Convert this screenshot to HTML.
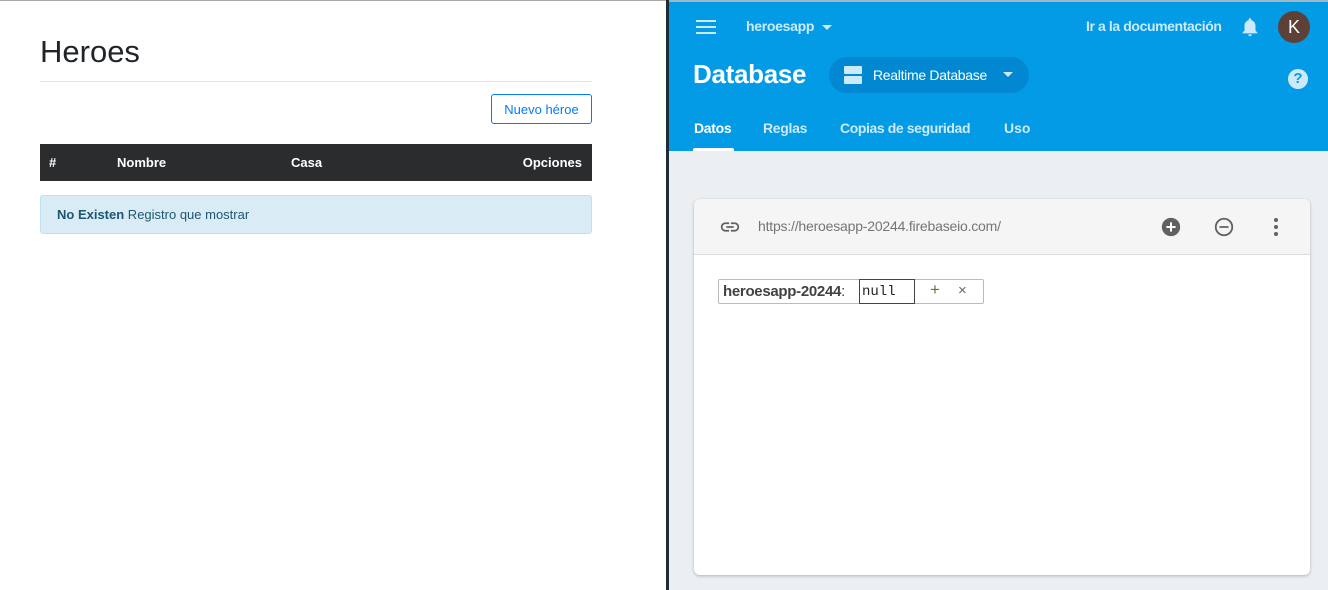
<!DOCTYPE html>
<html><head><meta charset="utf-8"><style>
*{box-sizing:border-box;margin:0;padding:0}
body{width:1328px;height:590px;overflow:hidden;font-family:"Liberation Sans",sans-serif;position:relative;background:#fff}
.a{position:absolute}
</style></head><body>
<div class="a" style="left:0;top:0;width:666px;height:1px;background:#aaa"></div>
<div class="a" style="left:40px;top:34px;font-size:31px;color:#212529">Heroes</div>
<div class="a" style="left:40px;top:81px;width:552px;height:1px;background:#e5e5e5"></div>
<div class="a" style="left:491px;top:94px;width:101px;height:30px;border:1px solid #007bff;border-radius:3px;color:#007bff;font-size:13px;text-align:center;line-height:29px">Nuevo héroe</div>
<div class="a" style="left:40px;top:144px;width:552px;height:37px;background:#2b2c2e;color:#fff;font-size:13px;font-weight:bold;line-height:38px">
<span class="a" style="left:9px">#</span><span class="a" style="left:77px">Nombre</span><span class="a" style="left:251px">Casa</span><span class="a" style="right:10px">Opciones</span></div>
<div class="a" style="left:40px;top:195px;width:552px;height:39px;background:#d9ecf5;border:1px solid #bfe0ee;border-radius:3px;color:#1d5670;font-size:13px;line-height:38px;padding-left:16px"><b>No Existen</b> Registro que mostrar</div>
<div class="a" style="left:666px;top:0;width:3px;height:590px;background:#1e2a38"></div>
<div class="a" style="left:669px;top:0;width:659px;height:590px;background:#eceff1"></div>
<div class="a" style="left:669px;top:0;width:659px;height:151px;background:#039be5"></div>
<div class="a" style="left:669px;top:0;width:659px;height:2px;background:#9fb6c4"></div>
<div class="a" style="left:696px;top:20px;width:20px;height:2px;background:#cdeafa;box-shadow:0 6px 0 #cdeafa,0 12px 0 #cdeafa"></div>
<div class="a" style="left:746px;top:18px;color:#cdeafa;font-size:14px;font-weight:bold;letter-spacing:-0.3px">heroesapp</div>
<div class="a" style="left:822px;top:25px;border:5px solid transparent;border-top-color:#cdeafa"></div>
<div class="a" style="left:1086px;top:18px;color:#cdeafa;font-size:14px;font-weight:bold;letter-spacing:-0.4px">Ir a la documentación</div>
<svg class="a" style="left:1239px;top:15px" width="22" height="24" viewBox="0 0 24 24"><path fill="#cdeafa" d="M12 22c1.1 0 2-.9 2-2h-4c0 1.1.9 2 2 2zm6-6v-5c0-3.07-1.63-5.64-4.5-6.32V4c0-.83-.67-1.5-1.5-1.5s-1.5.67-1.5 1.5v.68C7.64 5.36 6 7.92 6 11v5l-2 2v1h16v-1l-2-2z"/></svg>
<div class="a" style="left:1278px;top:11px;width:32px;height:32px;border-radius:50%;background:#5d4037;color:#fff;font-size:18px;text-align:center;line-height:32px">K</div>
<div class="a" style="left:693px;top:59px;color:#fff;font-size:26px;font-weight:bold;letter-spacing:-0.3px">Database</div>
<div class="a" style="left:829px;top:57px;width:200px;height:36px;border-radius:18px;background:#0288d1"></div>
<div class="a" style="left:844px;top:66px;width:18px;height:8px;background:#cdeafa;border-radius:1px"></div>
<div class="a" style="left:844px;top:76px;width:18px;height:8px;background:#cdeafa;border-radius:1px"></div>
<div class="a" style="left:873px;top:67px;color:#fff;font-size:14px;letter-spacing:-0.3px">Realtime Database</div>
<div class="a" style="left:1003px;top:72px;border:5px solid transparent;border-top-color:#cdeafa"></div>
<div class="a" style="left:1288px;top:69px;width:20px;height:20px;border-radius:50%;background:#cdeafa;color:#039be5;font-weight:bold;font-size:15px;text-align:center;line-height:20px">?</div>
<div class="a" style="left:694px;top:120px;color:#fff;font-size:14px;font-weight:bold;letter-spacing:-0.3px">Datos</div>
<div class="a" style="left:693px;top:148px;width:41px;height:3px;background:#fff;border-radius:2px 2px 0 0"></div>
<div class="a" style="left:763px;top:120px;color:#cdeafa;font-size:14px;font-weight:bold;letter-spacing:-0.3px">Reglas</div>
<div class="a" style="left:840px;top:120px;color:#cdeafa;font-size:14px;font-weight:bold;letter-spacing:-0.4px">Copias de seguridad</div>
<div class="a" style="left:1004px;top:120px;color:#cdeafa;font-size:14px;font-weight:bold">Uso</div>
<div class="a" style="left:694px;top:199px;width:616px;height:376px;background:#fff;border-radius:6px;box-shadow:0 1px 3px rgba(0,0,0,.25);overflow:hidden">
<div style="height:56px;background:#f5f5f5;border-bottom:1px solid #ddd;position:relative">
<svg class="a" style="left:25px;top:17px" width="22" height="22" viewBox="0 0 24 24"><path fill="#616161" d="M3.9 12c0-1.71 1.39-3.1 3.1-3.1h4V7H7c-2.76 0-5 2.24-5 5s2.24 5 5 5h4v-1.9H7c-1.71 0-3.1-1.39-3.1-3.1zM8 13h8v-2H8v2zm9-6h-4v1.9h4c1.71 0 3.1 1.39 3.1 3.1s-1.39 3.1-3.1 3.1h-4V17h4c2.76 0 5-2.24 5-5s-2.24-5-5-5z"/></svg>
<div class="a" style="left:64px;top:19px;font-size:14px;color:#757575;letter-spacing:-0.2px">https://heroesapp-20244.firebaseio.com/</div>
<svg class="a" style="left:466px;top:17px" width="22" height="22" viewBox="0 0 24 24"><circle cx="12" cy="12" r="10" fill="#616161"/><path d="M12 7v10M7 12h10" stroke="#fff" stroke-width="2.2"/></svg>
<svg class="a" style="left:519px;top:17px" width="22" height="22" viewBox="0 0 24 24"><circle cx="12" cy="12" r="9" fill="none" stroke="#616161" stroke-width="2"/><path d="M7 12h10" stroke="#616161" stroke-width="2"/></svg>
<svg class="a" style="left:572px;top:17px" width="20" height="22" viewBox="0 0 20 22"><circle cx="10" cy="4" r="2" fill="#616161"/><circle cx="10" cy="11" r="2" fill="#616161"/><circle cx="10" cy="18" r="2" fill="#616161"/></svg>
</div>
<div class="a" style="left:24px;top:80px;width:266px;height:25px;border:1px solid #bbb;border-radius:2px"></div>
<div class="a" style="left:29px;top:84px;font-size:15px;font-weight:bold;color:#424242;letter-spacing:-0.3px">heroesapp-20244<span style="font-weight:normal">:</span></div>
<div class="a" style="left:165px;top:80px;width:56px;height:25px;border:1px solid #444;font-family:'Liberation Mono',monospace;font-size:14px;line-height:25px;padding-left:2px;color:#222">null</div>
<div class="a" style="left:236px;top:81px;font-size:17px;color:#7a6a4a">+</div>
<div class="a" style="left:264px;top:83px;font-size:15px;color:#666">×</div>
</div>
</body></html>
